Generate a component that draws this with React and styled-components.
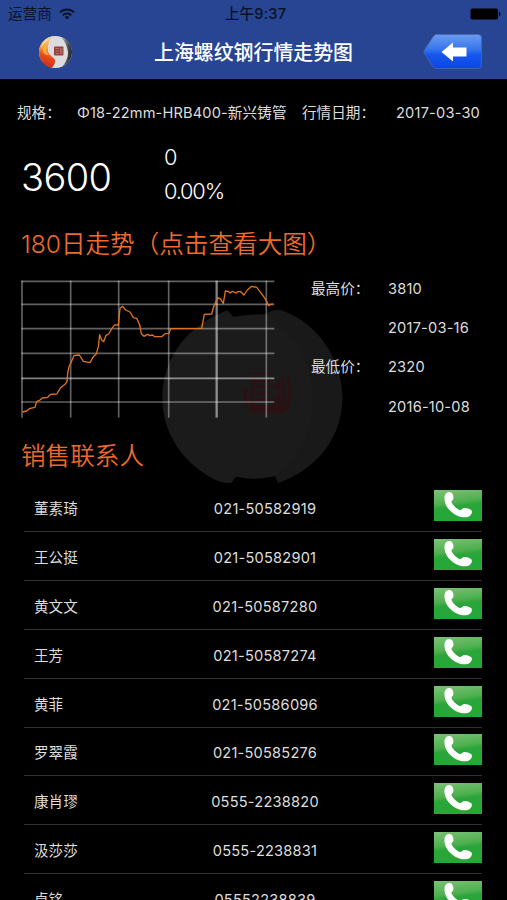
import React from 'react'
import styled, { createGlobalStyle } from 'styled-components'

const COLOR = {
  BLUE: '#284594',
  BLACK: '#000',
  ORANGE: '#ee6a2c',
  TEXT: '#dedede',
  LINE: '#303030',
}

const GlobalStyle = createGlobalStyle`
  body {
    margin: 0;
    background: ${COLOR.BLACK};
  }

  * {
    box-sizing: border-box;
  }
`

const Screen = styled.div`
  position: relative;
  width: 507px;
  height: 900px;
  overflow: hidden;
  background: ${COLOR.BLACK};
  color: ${COLOR.TEXT};
  font-family: Inter, 'Noto Sans CJK SC', sans-serif;
  font-size: 14.6px;
  line-height: 20px;
  white-space: nowrap;
`

const Header = styled.header`
  height: 79px;
  background: ${COLOR.BLUE};
`

const StatusBar = styled.div`
  display: grid;
  grid-template-columns: 1fr auto 1fr;
  align-items: center;
  height: 27px;
  padding: 0 6px 0 8px;
  color: #0b1226;
`

const Carrier = styled.div`
  display: flex;
  align-items: center;
  gap: 7px;
`

const Clock = styled.div`
  padding-left: 2px;
  font-weight: 500;
  letter-spacing: 0.2px;
`

const Battery = styled.svg`
  justify-self: end;
`

const NavBar = styled.div`
  display: grid;
  grid-template-columns: 86px 1fr 86px;
  align-items: center;
  height: 50px;
`

const LogoIcon = styled.svg`
  margin-left: 38px;
`

const Title = styled.h1`
  margin: 0;
  padding-top: 2px;
  color: #fff;
  font-size: 19.9px;
  font-weight: 500;
  line-height: 28px;
  text-align: center;
`

const BackButton = styled.button`
  justify-self: start;
  display: block;
  height: 38px;
  padding: 0;
  border: none;
  background: none;
`

const Watermark = styled.svg`
  position: absolute;
  left: 150px;
  top: 295px;
`

const Content = styled.main`
  position: relative;
`

const SpecRow = styled.div`
  display: grid;
  grid-template-columns: 60px 225px 94px 1fr;
  align-items: center;
  height: 68px;
  padding-left: 17px;
`

const Spaced = styled.span`
  letter-spacing: ${(props) => props.$gap || 0}px;
`

const PriceRow = styled.div`
  display: grid;
  grid-template-columns: 142px 1fr;
  align-items: center;
  height: 86px;
  margin-top: -7px;
  padding: 0 0 18px 22px;
  color: #fff;
`

const Price = styled.div`
  padding-top: 6px;
  margin-left: -1px;
  font-size: 38px;
  font-weight: 350;
  line-height: 46px;
  letter-spacing: -0.6px;
`

const Change = styled.div`
  font-size: 21.8px;
  font-weight: 350;
  line-height: 34px;
  letter-spacing: -1.2px;
`

const SectionTitle = styled.h2`
  margin: 0;
  padding-left: 21px;
  color: ${COLOR.ORANGE};
  font-size: 24.6px;
  font-weight: 350;
  line-height: 36px;
`

const Trend = styled.section`
  display: flex;
  margin-top: 18px;
  padding-left: 21px;
  height: 158px;
`

const Chart = styled.svg`
  flex: none;
  width: 254px;
  height: 138px;
`

const Extremes = styled.dl`
  display: grid;
  grid-template-columns: 77px 1fr;
  grid-template-rows: repeat(4, 39.2px);
  align-items: center;
  margin: -10.5px 0 0 36px;
`

const Term = styled.dt`
  grid-column: 1;
`

const Value = styled.dd`
  grid-column: 2;
  margin: 0;
  letter-spacing: 0.2px;
`

const ContactList = styled.ul`
  list-style: none;
  margin: 9.4px 25px 0 24px;
  padding: 0;
`

const ContactRow = styled.li`
  display: grid;
  grid-template-columns: 1fr auto 1fr;
  align-items: center;
  height: 48.83px;
  padding: 4px 0 0 10px;
  border-bottom: 1.5px solid ${COLOR.LINE};
`

const Phone = styled.span`
  margin-left: 14px;
  letter-spacing: 0.22px;
`

const CallButton = styled.button`
  justify-self: end;
  display: flex;
  width: 48px;
  height: 31px;
  margin-top: -7px;
  padding: 0;
  border: none;
  background: linear-gradient(172deg, #7cc277 0%, #4fb04f 40%, #2aa53a 52%, #22a935 100%);
`

const contacts = [
  { name: '董素琦', phone: '021-50582919' },
  { name: '王公挺', phone: '021-50582901' },
  { name: '黄文文', phone: '021-50587280' },
  { name: '王芳', phone: '021-50587274' },
  { name: '黄菲', phone: '021-50586096' },
  { name: '罗翠霞', phone: '021-50585276' },
  { name: '康肖璆', phone: '0555-2238820' },
  { name: '汲莎莎', phone: '0555-2238831' },
  { name: '卓铭', phone: '05552238839' },
]

const gridRows = [49, 118, 191, 265, 340, 411]
const gridColumns = [36, 182, 326, 476, 620, 769]

const trendPoints = `37,441 50,438 58,431 75,427 80,410 90,405 97,399 113,397 122,388 140,387
  152,368 165,358 171,350 173,325 177,305 184,290 192,272 208,270 220,289 240,293 250,275 259,266
  265,245 269,209 275,225 281,230 288,211 296,207 305,191 315,179 325,181 330,130 338,124 347,135
  360,141 370,158 380,160 389,180 394,206 402,214 412,208 420,212 428,210 434,215 455,215 465,206
  477,205 482,191 575,190 583,148 605,147 612,122 623,99 630,100 640,115 646,78 655,79 660,84
  667,79 678,84 683,80 692,80 702,90 712,75 725,64 740,67 750,80 765,100 776,122 782,118 789,117`

const WifiIcon = () => (
  <svg width="16" height="12" viewBox="0 0 16 12" fill="none" stroke="#0b1226" strokeWidth="2">
    <path d="M1 4.4a10 10 0 0 1 14 0" />
    <path d="M3.7 7.2a6.2 6.2 0 0 1 8.6 0" />
    <path d="M8 11.6 5.7 9.2a3.3 3.3 0 0 1 4.6 0z" fill="#0b1226" stroke="none" />
  </svg>
)

const Logo = () => (
  <LogoIcon width="35" height="34" viewBox="0 0 35 34">
    <defs>
      <linearGradient id="flame" x1="0.6" y1="0" x2="0.4" y2="1">
        <stop offset="0" stopColor="#eed9b4" />
        <stop offset="0.4" stopColor="#f0a02c" />
        <stop offset="0.65" stopColor="#e8481a" />
        <stop offset="1" stopColor="#c8281a" />
      </linearGradient>
      <linearGradient id="steel" x1="0" y1="0" x2="1" y2="0.3">
        <stop offset="0" stopColor="#b4b6ba" />
        <stop offset="0.6" stopColor="#585b60" />
        <stop offset="1" stopColor="#262a31" />
      </linearGradient>
    </defs>
    <ellipse cx="17.5" cy="17" rx="16.5" ry="16" fill="#dcdcde" />
    <path d="M23 2c7 2 11 8 11 15 0 7-5 13-10 15 4-5 6-9 6-15-1-6-3-11-7-15z" fill="url(#steel)" />
    <path
      d="M16 1C7 2 1 9 1 17c0 7 5 14 12.500 16 3-3 4-6 3.500-8-1-3-6-4-7-9C9.500 9 12 4 16 1z"
      fill="url(#flame)"
    />
    <path d="M12 3C7 5 3 9 3 15c1-5 4-8 9-12z" fill="#f6e6c4" />
    <path d="M9 9c-2 4-1 8 2 11-4 0-6-2-6-5 0-2 2-4 4-6z" fill="#fbc04a" opacity="0.7" />
    <rect x="16" y="11.500" width="9.500" height="9" rx="1" fill="#98403c" />
    <path
      d="M17.500 13.500h3.500M17.500 16h3.500M17.500 18.500h3.500M22.500 13v6M24 13v6"
      stroke="#c8908a"
      strokeWidth="0.6"
    />
  </LogoIcon>
)

const BackIcon = () => (
  <svg width="62" height="38" viewBox="0 0 62 38">
    <defs>
      <linearGradient id="back" x1="0" y1="0" x2="0" y2="1">
        <stop offset="0" stopColor="#6b9cf0" />
        <stop offset="0.45" stopColor="#3474ec" />
        <stop offset="0.6" stopColor="#1556ee" />
        <stop offset="1" stopColor="#0b47e4" />
      </linearGradient>
    </defs>
    <path
      d="M15 1.500H57Q60.500 1.500 60.500 5V32Q60.500 35.500 57 35.500H15Q13.500 35.500 12 33.500L3.500 20.500Q2.300 18.700 3.500 17L12 4Q13.500 1.500 15 1.500Z"
      fill="url(#back)"
      stroke="#4a68aa"
      strokeWidth="0.8"
    />
    <path d="M20.500 19 32 9.500V14.500H45.500V23.500H32V28.500Z" fill="#fff" />
  </svg>
)

const PhoneIcon = () => (
  <svg width="48" height="31" viewBox="0 0 144 93">
    <path
      d="M41 7C48 4 55 8 57 15C59 22 59 28 55 31C51 34 52 38 56 43C62 51 68 56 76 60C82 62 84 55 90 54C98 53 107 56 112 61C116 66 113 73 108 77C100 83 85 83 70 77C50 68 35 51 32 32C30 21 32 11 41 7Z"
      fill="#fff"
    />
  </svg>
)

const WatermarkArt = () => (
  <Watermark width="200" height="200" viewBox="0 90 600 600">
    <path
      d="M180 160L232 136L250 155Q305 147 350 148Q370 128 400 138C505 178 577 285 577 398C577 515 500 615 384 653L376 633Q318 648 258 635L245 653Q225 656 205 649C105 603 37 510 37 400C37 300 90 215 165 170Z"
      fill="#1b1b1b"
    />
    <path
      d="M350 148C430 200 480 285 489 390C495 480 455 580 376 633L384 653C500 615 577 515 577 398C577 285 505 178 400 138Q370 128 350 148Z"
      fill="#191919"
    />
    <g fill="none" stroke="#2b1014" strokeWidth="9">
      <path d="M287 325H372" strokeWidth="3" />
      <path d="M290 370Q282 395 290 425M413 335Q426 380 412 433" />
      <path d="M312 338Q300 390 308 430M305 346H360M314 365H360M314 385H360M314 405H360" />
      <path d="M372 435V398M398 342V372L374 368ZM388 385V435M402 375V435" />
      <path d="M300 432H402" strokeWidth="24" />
    </g>
  </Watermark>
)

const TrendChart = () => (
  <Chart viewBox="33 45 762 414">
    <g stroke="#fff" strokeWidth="5">
      {gridRows.map((y) => (
        <line key={y} x1="34" x2="793" y1={y} y2={y} strokeOpacity={y === 340 ? 0.5 : 0.38} />
      ))}
      {gridColumns.map((x) => (
        <line
          key={x}
          x1={x}
          x2={x}
          y1="47"
          y2="458"
          strokeWidth={x === 620 ? 7 : 5}
          strokeOpacity={x === 620 ? 0.5 : 0.38}
        />
      ))}
    </g>
    <polyline points={trendPoints} fill="none" stroke="#e0731f" strokeWidth="4" strokeLinejoin="round" />
  </Chart>
)

const App = () => (
  <Screen>
    <GlobalStyle />
    <Header>
      <StatusBar>
        <Carrier>
          <span>运营商</span>
          <WifiIcon />
        </Carrier>
        <Clock>上午9:37</Clock>
        <Battery width="31" height="12" viewBox="0 0 31 12">
          <rect x="0.500" y="0.500" width="27.500" height="11" rx="2" fill="#000" />
          <path d="M29 4q1.500 0.500 1.500 2T29 8z" fill="#000" />
        </Battery>
      </StatusBar>
      <NavBar>
        <Logo />
        <Title>上海螺纹钢行情走势图</Title>
        <BackButton aria-label="返回">
          <BackIcon />
        </BackButton>
      </NavBar>
    </Header>
    <WatermarkArt />
    <Content>
      <SpecRow>
        <span>规格：</span>
        <Spaced $gap={0.15}>Φ18-22mm-HRB400-新兴铸管</Spaced>
        <span>行情日期：</span>
        <Spaced $gap={0.2}>2017-03-30</Spaced>
      </SpecRow>
      <PriceRow>
        <Price>3600</Price>
        <div>
          <Change>0</Change>
          <Change>0.00%</Change>
        </div>
      </PriceRow>
      <SectionTitle>180日走势（点击查看大图）</SectionTitle>
      <Trend>
        <TrendChart />
        <Extremes>
          <Term>最高价：</Term>
          <Value>3810</Value>
          <Value>2017-03-16</Value>
          <Term>最低价：</Term>
          <Value>2320</Value>
          <Value>2016-10-08</Value>
        </Extremes>
      </Trend>
      <SectionTitle>销售联系人</SectionTitle>
      <ContactList>
        {contacts.map(({ name, phone }) => (
          <ContactRow key={phone}>
            <span>{name}</span>
            <Phone>{phone}</Phone>
            <CallButton aria-label={name}>
              <PhoneIcon />
            </CallButton>
          </ContactRow>
        ))}
      </ContactList>
    </Content>
  </Screen>
)

export default App
